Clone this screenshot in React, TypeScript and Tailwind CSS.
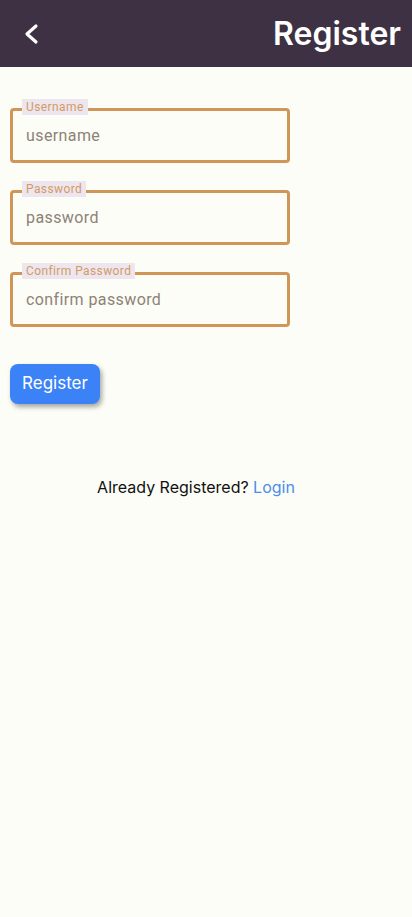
import React from 'react';

const Field: React.FC<{ label: string; placeholder: string; type?: string }> = ({ label, placeholder, type = 'text' }) => (
    <div className="relative w-[280px]">
        <input
            type={type}
            placeholder={placeholder}
            className="w-full h-[55px] border-[3px] border-[#d09658] rounded-[4px] bg-transparent pl-[13px] text-[16px] tracking-[0.4px] text-[#3b3b3b] placeholder:text-[#8e8276] outline-none font-['Roboto',sans-serif]"
        />
        <span className="absolute left-[12px] top-[-9px] h-[16px] px-[4px] bg-[#ede6ee] text-[12px] tracking-[0.4px] leading-[16px] text-[#d49a66] font-['Roboto',sans-serif]">
            {label}
        </span>
    </div>
);

export default function App() {
    return (
        <div className="min-h-[917px] w-full bg-[#fcfdf7] font-['Inter',sans-serif]">
            <header className="h-[67px] bg-[#3e3143] flex items-center justify-between pl-[22px] pr-[11px]">
                <button className="p-0">
                    <svg width="20" height="22" viewBox="0 0 20 22" fill="none">
                        <path d="M14 3 L5 11 L14 19" stroke="white" strokeWidth="3.2" strokeLinecap="round" strokeLinejoin="round" />
                    </svg>
                </button>
                <h1 className="text-[32px] font-semibold text-white leading-none">Register</h1>
            </header>

            <div className="px-[10px] pt-[41px] flex flex-col gap-[27px]">
                <Field label="Username" placeholder="username" />
                <Field label="Password" placeholder="password" type="password" />
                <Field label="Confirm Password" placeholder="confirm password" type="password" />
            </div>

            <div className="px-[10px] pt-[37px]">
                <button className="w-[90px] h-[40px] rounded-[8px] bg-[#3b82f6] text-white text-[17px] shadow-[2px_3px_5px_rgba(0,0,0,0.35)]">
                    Register
                </button>
            </div>

            <div className="w-[392px] pt-[71px] text-center text-[16px] text-[#111]">
                Already Registered? <span className="text-[#4b8ee8]">Login</span>
            </div>
        </div>
    );
}
